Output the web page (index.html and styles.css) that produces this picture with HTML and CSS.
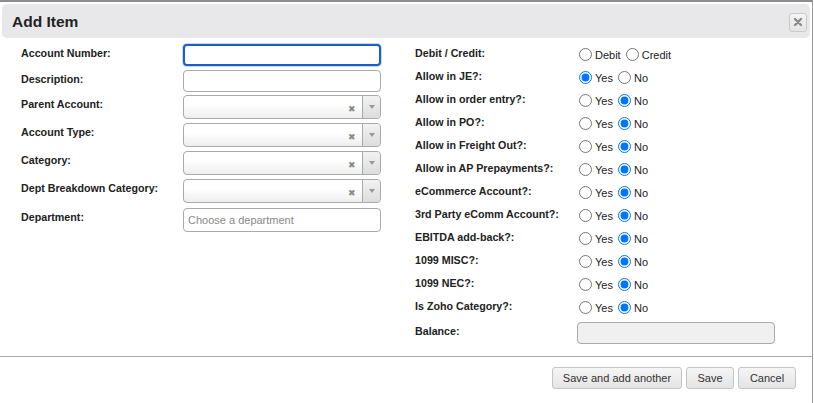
FILE: index.html
```
<!DOCTYPE html>
<html>
<head>
<meta charset="utf-8">
<link rel="stylesheet" href="styles.css">
</head>
<body>
<div class="dialog">
  <div class="header">
    <div class="title">Add Item</div>
    <button class="close" type="button"><svg width="10" height="10" viewBox="0 0 10 10"><path d="M2 2 L8 8 M8 2 L2 8" stroke="#8a8a8a" stroke-width="2.4" stroke-linecap="round"/></svg></button>
  </div>
  <div class="body">
    <div class="col left">
      <div class="lrow r-text"><label>Account Number:</label><div class="txt focus"></div></div>
      <div class="lrow r-text"><label>Description:</label><div class="txt"></div></div>
      <div class="lrow r-sel"><label>Parent Account:</label><div class="sel"><span class="x">✖</span><span class="arr"><i></i></span></div></div>
      <div class="lrow r-sel"><label>Account Type:</label><div class="sel"><span class="x">✖</span><span class="arr"><i></i></span></div></div>
      <div class="lrow r-sel"><label>Category:</label><div class="sel"><span class="x">✖</span><span class="arr"><i></i></span></div></div>
      <div class="lrow r-sel"><label>Dept Breakdown Category:</label><div class="sel"><span class="x">✖</span><span class="arr"><i></i></span></div></div>
      <div class="lrow r-dept"><label>Department:</label><div class="chosen">Choose a department</div></div>
    </div>
    <div class="col right">
      <div class="rrow"><label>Debit / Credit:</label><div class="opts"><input type="radio" name="dc"><span>Debit</span><input type="radio" name="dc"><span>Credit</span></div></div>
      <div class="rrow"><label>Allow in JE?:</label><div class="opts"><input type="radio" name="a1" checked><span>Yes</span><input type="radio" name="a1"><span>No</span></div></div>
      <div class="rrow"><label>Allow in order entry?:</label><div class="opts"><input type="radio" name="a2"><span>Yes</span><input type="radio" name="a2" checked><span>No</span></div></div>
      <div class="rrow"><label>Allow in PO?:</label><div class="opts"><input type="radio" name="a3"><span>Yes</span><input type="radio" name="a3" checked><span>No</span></div></div>
      <div class="rrow"><label>Allow in Freight Out?:</label><div class="opts"><input type="radio" name="a4"><span>Yes</span><input type="radio" name="a4" checked><span>No</span></div></div>
      <div class="rrow"><label>Allow in AP Prepayments?:</label><div class="opts"><input type="radio" name="a5"><span>Yes</span><input type="radio" name="a5" checked><span>No</span></div></div>
      <div class="rrow"><label>eCommerce Account?:</label><div class="opts"><input type="radio" name="a6"><span>Yes</span><input type="radio" name="a6" checked><span>No</span></div></div>
      <div class="rrow"><label>3rd Party eComm Account?:</label><div class="opts"><input type="radio" name="a7"><span>Yes</span><input type="radio" name="a7" checked><span>No</span></div></div>
      <div class="rrow"><label>EBITDA add-back?:</label><div class="opts"><input type="radio" name="a8"><span>Yes</span><input type="radio" name="a8" checked><span>No</span></div></div>
      <div class="rrow"><label>1099 MISC?:</label><div class="opts"><input type="radio" name="a9"><span>Yes</span><input type="radio" name="a9" checked><span>No</span></div></div>
      <div class="rrow"><label>1099 NEC?:</label><div class="opts"><input type="radio" name="a10"><span>Yes</span><input type="radio" name="a10" checked><span>No</span></div></div>
      <div class="rrow"><label>Is Zoho Category?:</label><div class="opts"><input type="radio" name="a11"><span>Yes</span><input type="radio" name="a11" checked><span>No</span></div></div>
      <div class="rrow r-bal"><label>Balance:</label><div class="balance"></div></div>
    </div>
  </div>
  <div class="footer">
    <button class="btn b-another" type="button">Save and add another</button>
    <button class="btn b-save" type="button">Save</button>
    <button class="btn b-cancel" type="button">Cancel</button>
  </div>
</div>
</body>
</html>
```
FILE: styles.css
```
* { box-sizing: border-box; }
html, body { margin: 0; padding: 0; background: #fff; }
body {
  font-family: "Liberation Sans", Arial, Helvetica, sans-serif;
  color: #222;
  width: 814px;
  height: 403px;
  overflow: hidden;
}
.dialog {
  width: 813px;
  height: 403px;
  border-top: 2px solid #8d8d8d;
  border-right: 1px solid #9a9a9a;
}
.header {
  margin: 2px 2px 0 2px;
  height: 34px;
  background: #e8e8eb;
  border-radius: 5px;
  display: flex;
  align-items: center;
  justify-content: space-between;
  padding: 0 3px 0 10px;
}
.title {
  font-weight: bold;
  font-size: 15.5px;
  color: #222;
  margin-top: 1px;
}
.close {
  width: 18px;
  height: 19px;
  border: 1px solid #c9c9c9;
  border-radius: 3px;
  background: linear-gradient(#f4f4f4, #e6e6e6);
  padding: 0;
  display: flex;
  align-items: center;
  justify-content: center;
  margin-top: 2px;
}
.body {
  display: flex;
  padding: 6px 0 0 21px;
  height: 319px;
  border-bottom: 1px solid #a8a8a8;
}
.col.left { width: 360px; }
.col.right { margin-left: 34px; }
label {
  font-size: 10.7px;
  font-weight: bold;
  line-height: 16px;
  color: #222;
  display: block;
  padding-top: 1px;
}
.lrow { display: flex; }
.lrow label { width: 162px; flex: none; }
.r-text { height: 26px; }
.r-sel { height: 28px; }
.txt {
  width: 198px;
  height: 22px;
  border: 1px solid #aaa;
  border-radius: 4px;
  background: #fff;
}
.txt.focus {
  border: 2px solid #1a5fc4;
  border-radius: 4px;
  box-shadow: 0 0 0 1px rgba(26,95,196,0.25);
}
.r-text + .r-sel { margin-top: -1px; }
.sel {
  width: 198px;
  height: 24px;
  border: 1px solid #aaa;
  border-radius: 4px;
  background: linear-gradient(#fff 0%, #fff 40%, #eee 100%);
  display: flex;
  justify-content: flex-end;
  align-items: stretch;
}
.sel .x {
  font-size: 9px;
  color: #888;
  width: 20px;
  display: flex;
  align-items: center;
  justify-content: center;
  padding-top: 4px;
}
.sel .arr {
  width: 18px;
  border-left: 1px solid #aaa;
  background: linear-gradient(#f2f2f2, #dcdcdc);
  border-radius: 0 4px 4px 0;
  display: flex;
  align-items: center;
  justify-content: center;
}
.sel .arr i {
  width: 0; height: 0;
  border-left: 3px solid transparent;
  border-right: 3px solid transparent;
  border-top: 4px solid #999;
}
.r-dept { margin-top: 1px; }
.chosen {
  width: 198px;
  height: 24px;
  border: 1px solid #aaa;
  border-radius: 4px;
  background: #fff;
  font-size: 11px;
  color: #888;
  padding: 0 4px;
  line-height: 22px;
}
.rrow { display: flex; height: 23px; }
.rrow label { width: 162px; flex: none; }
.r-bal label { padding-top: 3px; }
.opts {
  display: flex;
  align-items: center;
  height: 18px;
  font-size: 11px;
  color: #222;
  padding-top: 3px;
}
.opts input {
  margin: 0 3px 0 2px;
  width: 13px;
  height: 13px;
}
.opts span { margin-right: 3px; }
.balance {
  width: 198px;
  height: 22px;
  margin-top: 2px;
  border: 1px solid #aaa;
  border-radius: 4px;
  background: #f0f0f0;
}
.footer {
  display: flex;
  justify-content: flex-end;
  gap: 4px;
  padding: 10px 16px 0 0;
}
.btn {
  height: 22px;
  font-family: "Liberation Sans", Arial, Helvetica, sans-serif;
  font-size: 11px;
  color: #333;
  border: 1px solid #c4c4c4;
  border-radius: 3px;
  background: linear-gradient(#f5f5f5, #e4e4e4);
  padding: 0;
  text-align: center;
}
.b-another { width: 130px; }
.b-save { width: 48px; }
.b-cancel { width: 58px; }
```
